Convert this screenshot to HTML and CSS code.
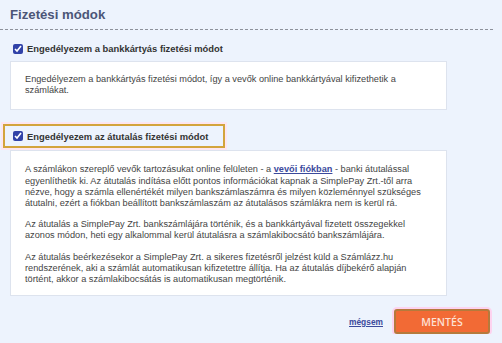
FILE: index.html
```html
<!DOCTYPE html>
<html lang="hu">
<head>
<meta charset="utf-8">
<link rel="stylesheet" href="styles.css">
</head>
<body>
<div class="page">
  <h2 class="heading">Fizetési módok</h2>

  <div class="option">
    <label class="opt-label">
      <input type="checkbox" class="cb" checked>
      <span>Engedélyezem a bankkártyás fizetési módot</span>
    </label>
    <div class="panel">
      <p>Engedélyezem a bankkártyás fizetési módot, így a vevők online bankkártyával kifizethetik a számlákat.</p>
    </div>
  </div>

  <div class="option option-2">
    <label class="opt-label focused">
      <input type="checkbox" class="cb" checked>
      <span>Engedélyezem az átutalás fizetési módot</span>
    </label>
    <div class="panel">
      <p>A számlákon szereplő vevők tartozásukat online felületen - a <a href="#" class="link">vevői fiókban</a> - banki átutalással egyenlíthetik ki. Az átutalás indítása előtt pontos információkat kapnak a SimplePay Zrt.-től arra nézve, hogy a számla ellenértékét milyen bankszámlaszámra és milyen közleménnyel szükséges átutalni, ezért a fiókban beállított bankszámlaszám az átutalásos számlákra nem is kerül rá.</p>
      <p>Az átutalás a SimplePay Zrt. bankszámlájára történik, és a bankkártyával fizetett összegekkel azonos módon, heti egy alkalommal kerül átutalásra a számlakibocsátó bankszámlájára.</p>
      <p>Az átutalás beérkezésekor a SimplePay Zrt. a sikeres fizetésről jelzést küld a Számlázz.hu rendszerének, aki a számlát automatikusan kifizetettre állítja. Ha az átutalás díjbekérő alapján történt, akkor a számlakibocsátás is automatikusan megtörténik.</p>
    </div>
  </div>

  <div class="actions">
    <a href="#" class="cancel">mégsem</a>
    <button class="save">MENTÉS</button>
  </div>
</div>
</body>
</html>
```
FILE: styles.css
```css
html, body {
  margin: 0;
  padding: 0;
  background: #edf3fd;
  font-family: "Liberation Sans", Arial, sans-serif;
}
.page {
  width: 493px;
}
.heading {
  margin: 0;
  padding: 7px 10px 6px;
  font-size: 13.2px;
  font-weight: bold;
  color: #4b5677;
  border-bottom: 1px dashed #8d919b;
  line-height: 16px;
}
.option {
  margin-top: 9px;
}
.option-2 {
  margin-top: 14px;
}
.opt-label {
  display: flex;
  align-items: center;
  gap: 4px;
  padding: 0 0 0 13px;
  height: 19px;
  font-size: 9.4px;
  font-weight: bold;
  color: #333;
}
.opt-label.focused {
  width: 210px;
  margin-left: 3px;
  padding-left: 8px;
  border: 2px solid #d3a43c;
  box-shadow: 0 0 0 2px #fde6f0;
  height: 20px;
}
.cb {
  margin: 0;
  width: 10px;
  height: 10px;
  accent-color: #3142a8;
}
.panel {
  margin: 3px 46px 0 10px;
  background: #fff;
  border: 1px solid #dde3ee;
  padding: 12px 14px 13px;
  font-size: 9.2px;
  line-height: 11.2px;
  color: #444;
}
.option-2 .panel {
  margin-top: 2px;
  padding-top: 13px;
  padding-bottom: 10px;
}
.panel p {
  margin: 0 0 10px;
}
.panel p:last-child {
  margin-bottom: 0;
}
.link {
  color: #3b4a9c;
  font-weight: bold;
  text-decoration: underline;
}
.actions {
  display: flex;
  justify-content: flex-end;
  align-items: center;
  gap: 11px;
  padding: 13px 3px 0 0;
}
.cancel {
  color: #3b4a9c;
  font-size: 8.4px;
  font-weight: bold;
  text-decoration: underline;
}
.save {
  width: 96px;
  height: 25px;
  padding: 0;
  background: #f26a35;
  color: #fde0d4;
  border: 2px solid #b57a3c;
  border-radius: 3px;
  box-shadow: 0 0 0 2px #fdd3ef;
  font-family: "Open Sans", "Liberation Sans", sans-serif;
  font-size: 10.5px;
  font-weight: 600;
}
```
